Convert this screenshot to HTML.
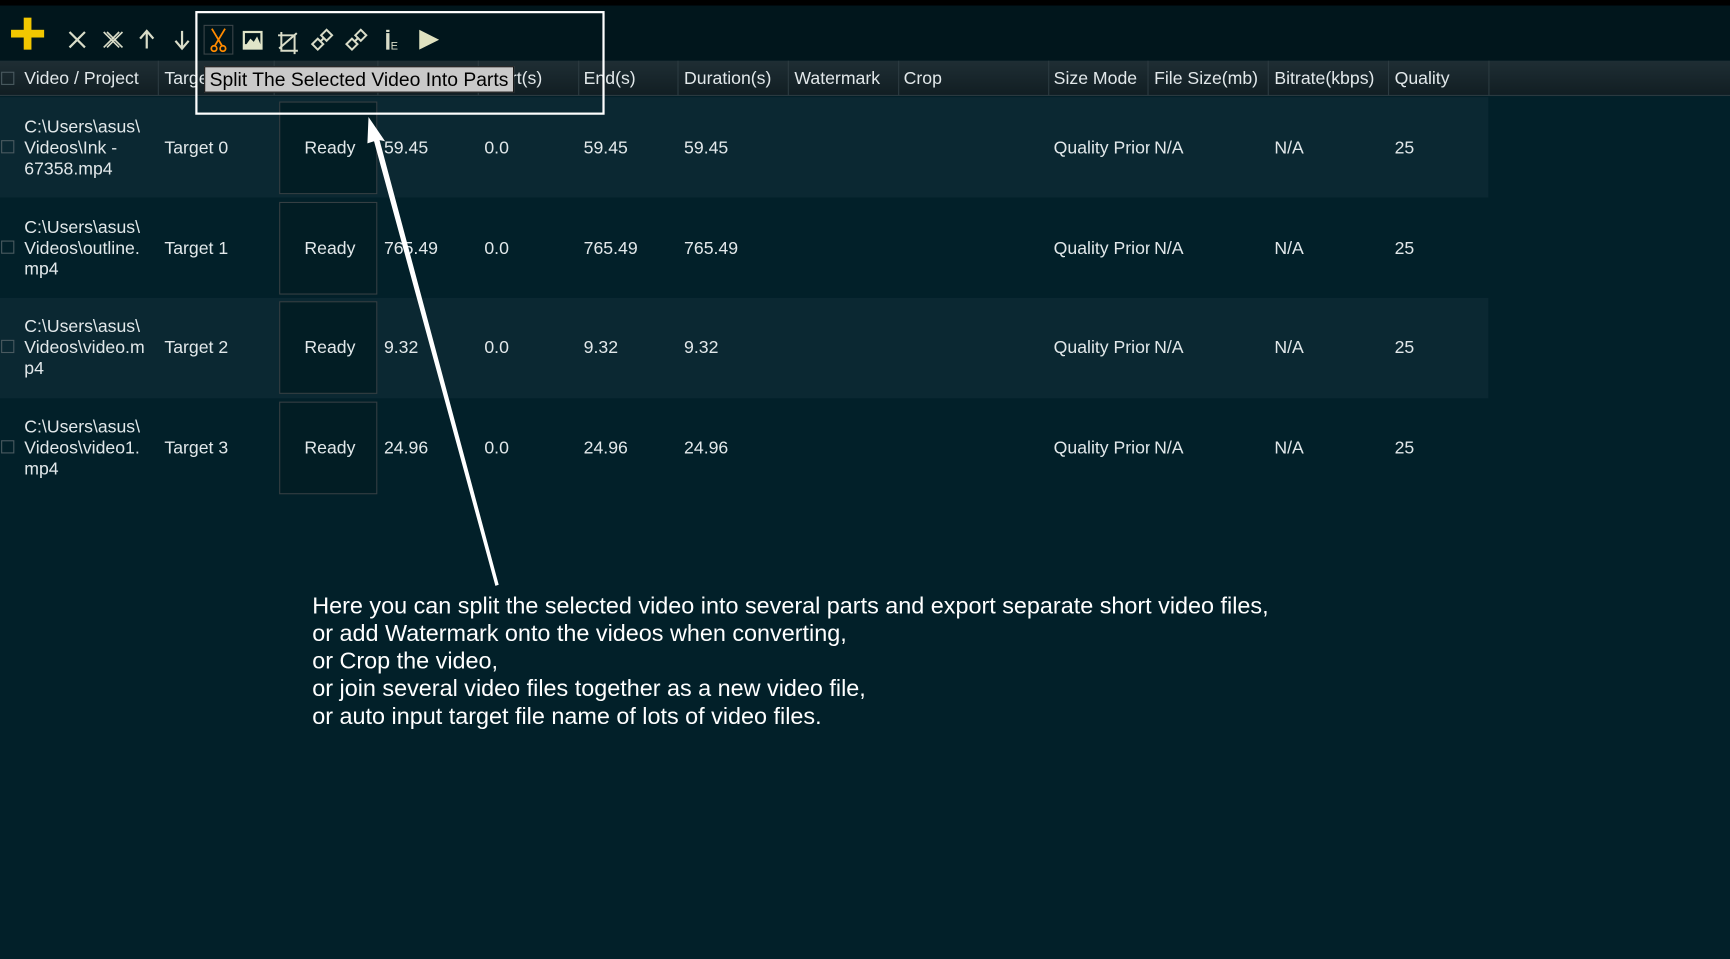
<!DOCTYPE html>
<html><head><meta charset="utf-8"><style>
html,body{margin:0;padding:0;width:1730px;height:959px;overflow:hidden;background:#022029;}
#w{position:absolute;left:0;top:0;width:1568px;height:869px;transform:scale(1.10332);transform-origin:0 0;font-family:"Liberation Sans",Arial,sans-serif;color:#e2e8ea;font-size:16px;}
.top{position:absolute;left:0;top:0;width:1568px;height:55px;background:#01161c;border-top:5px solid #000;box-sizing:border-box;}
.hdr{position:absolute;left:0;top:55px;width:1568px;height:32px;background:linear-gradient(#1f2e34,#111e23);border-bottom:1px solid #2a3a40;box-sizing:border-box;}
.hdr span{position:absolute;top:8px;white-space:nowrap;}
.sep{position:absolute;top:0;width:1px;height:32px;background:#2c3b41;}
.row{position:absolute;left:0;width:1349px;height:91px;}
.light{background:#0b2832;}
.t{position:absolute;white-space:nowrap;}
.sm{width:87px;overflow:hidden;}
.cb{position:absolute;left:1px;width:12px;height:12px;border:1px solid #4a5a60;box-sizing:border-box;}
.ready{position:absolute;left:253px;width:89px;height:84px;background:#021d24;border:1px solid #353f43;box-sizing:border-box;text-align:center;line-height:84px;padding-left:3px;}
.note{position:absolute;left:283px;top:537px;font-size:21.2px;line-height:25px;color:#fff;white-space:nowrap;}
</style></head><body><div id="w">
<div class="top"></div>
<svg style="position:absolute;left:0;top:0" width="560" height="60">
<rect x="10" y="27" width="30" height="7" fill="#f2c700"/><rect x="21.5" y="16" width="7" height="29" fill="#f2c700"/>
<g stroke="#d9dcc8" stroke-width="2" fill="none">
<path d="M63 29 L77 43 M77 29 L63 43"/>
<path d="M94 29 L108 43 M108 29 L94 43 M97 29 L111 43 M111 29 L97 43" stroke-width="1.5"/>
<path d="M133 44 L133 29 M127 35 L133 28 L139 35"/>
<path d="M165 28 L165 43 M159 37 L165 44 L171 37"/>
<path d="M255 29 L255 46 L270 46 M252 32 L267 32 L267 49 M253 44 L269 30" stroke-width="1.8"/>
<path d="M283 40 L288 35 L293 40 L288 45 Z M291 32 L296 27 L301 32 L296 37 Z M290 38 L294 34" stroke-width="1.8"/>
<path d="M314 40 L319 35 L324 40 L319 45 Z M322 32 L327 27 L332 32 L327 37 Z M321 38 L325 34" stroke-width="1.8"/>
</g>
<rect x="185" y="23" width="26" height="26" fill="none" stroke="#3a4448" stroke-width="1"/>
<g stroke="#ff8a00" stroke-width="1.6" fill="none"><path d="M192 26 L201 41 M204 26 L195 41"/><circle cx="194" cy="44" r="2.5"/><circle cx="202" cy="44" r="2.5"/></g>
<rect x="220" y="28" width="18" height="17" fill="#e0e4c8"/><rect x="222" y="30" width="14" height="10" fill="#01161c"/><path d="M222 42 L227 35 L230 38 L233 33 L236 40 L236 43 L222 43 Z" fill="#e0e4c8"/>
<rect x="350" y="30" width="3" height="15" fill="#d9dcc8"/><rect x="350" y="27" width="3" height="2" fill="#d9dcc8"/>
<text x="354" y="45" font-size="10" fill="#d9dcc8" font-family="Liberation Sans">E</text>
<path d="M380 27 L398 36 L380 45 Z" fill="#e0e2c0"/>
</svg>
<div class="hdr">
<div class="cb" style="top:10px"></div>
<span style="left:22px">Video / Project</span><div class="sep" style="left:143px"></div>
<span style="left:149px">Target</span><div class="sep" style="left:248px"></div>
<span style="left:348px">Source</span><div class="sep" style="left:342px"></div>
<span style="left:439px">Start(s)</span><div class="sep" style="left:433px"></div>
<span style="left:529px">End(s)</span><div class="sep" style="left:524px"></div>
<span style="left:620px">Duration(s)</span><div class="sep" style="left:614px"></div>
<span style="left:720px">Watermark</span><div class="sep" style="left:714px"></div>
<span style="left:819px">Crop</span><div class="sep" style="left:814px"></div>
<span style="left:955px">Size Mode</span><div class="sep" style="left:950px"></div>
<span style="left:1046px">File Size(mb)</span><div class="sep" style="left:1040px"></div>
<span style="left:1155px">Bitrate(kbps)</span><div class="sep" style="left:1149px"></div>
<span style="left:1264px">Quality</span><div class="sep" style="left:1258px"></div>
<div class="sep" style="left:1349px"></div>
</div>

<div class="row light" style="top:88px"></div>
<div class="row" style="top:179px"></div>
<div class="row light" style="top:270px"></div>
<div class="row" style="top:360px"></div>

<!-- row 0 -->
<div class="cb" style="top:127px"></div>
<div class="t" style="left:22px;top:106px;line-height:19px">C:\Users\asus\<br>Videos\Ink -<br>67358.mp4</div>
<div class="t" style="left:149px;top:126px">Target 0</div>
<div class="ready" style="top:92px">Ready</div>
<div class="t" style="left:348px;top:126px">59.45</div><div class="t" style="left:439px;top:126px">0.0</div>
<div class="t" style="left:529px;top:126px">59.45</div><div class="t" style="left:620px;top:126px">59.45</div>
<div class="t sm" style="left:955px;top:126px">Quality Priority</div><div class="t" style="left:1046px;top:126px">N/A</div><div class="t" style="left:1155px;top:126px">N/A</div><div class="t" style="left:1264px;top:126px">25</div>
<!-- row 1 -->
<div class="cb" style="top:218px"></div>
<div class="t" style="left:22px;top:197px;line-height:19px">C:\Users\asus\<br>Videos\outline.<br>mp4</div>
<div class="t" style="left:149px;top:217px">Target 1</div>
<div class="ready" style="top:183px">Ready</div>
<div class="t" style="left:348px;top:217px">765.49</div><div class="t" style="left:439px;top:217px">0.0</div>
<div class="t" style="left:529px;top:217px">765.49</div><div class="t" style="left:620px;top:217px">765.49</div>
<div class="t sm" style="left:955px;top:217px">Quality Priority</div><div class="t" style="left:1046px;top:217px">N/A</div><div class="t" style="left:1155px;top:217px">N/A</div><div class="t" style="left:1264px;top:217px">25</div>
<!-- row 2 -->
<div class="cb" style="top:308px"></div>
<div class="t" style="left:22px;top:287px;line-height:19px">C:\Users\asus\<br>Videos\video.m<br>p4</div>
<div class="t" style="left:149px;top:307px">Target 2</div>
<div class="ready" style="top:273px">Ready</div>
<div class="t" style="left:348px;top:307px">9.32</div><div class="t" style="left:439px;top:307px">0.0</div>
<div class="t" style="left:529px;top:307px">9.32</div><div class="t" style="left:620px;top:307px">9.32</div>
<div class="t sm" style="left:955px;top:307px">Quality Priority</div><div class="t" style="left:1046px;top:307px">N/A</div><div class="t" style="left:1155px;top:307px">N/A</div><div class="t" style="left:1264px;top:307px">25</div>
<!-- row 3 -->
<div class="cb" style="top:399px"></div>
<div class="t" style="left:22px;top:378px;line-height:19px">C:\Users\asus\<br>Videos\video1.<br>mp4</div>
<div class="t" style="left:149px;top:398px">Target 3</div>
<div class="ready" style="top:364px">Ready</div>
<div class="t" style="left:348px;top:398px">24.96</div><div class="t" style="left:439px;top:398px">0.0</div>
<div class="t" style="left:529px;top:398px">24.96</div><div class="t" style="left:620px;top:398px">24.96</div>
<div class="t sm" style="left:955px;top:398px">Quality Priority</div><div class="t" style="left:1046px;top:398px">N/A</div><div class="t" style="left:1155px;top:398px">N/A</div><div class="t" style="left:1264px;top:398px">25</div>

<div style="position:absolute;left:185px;top:60px;width:281px;height:24px;background:#c9c9c9;border:1px solid #111;box-sizing:border-box;color:#000;font-size:17.5px;line-height:22px;padding-left:4px;white-space:nowrap;overflow:hidden">Split The Selected Video Into Parts</div>
<div style="position:absolute;left:177px;top:10px;width:371px;height:94px;border:2px solid #fff;box-sizing:border-box"></div>

<svg style="position:absolute;left:0;top:0" width="600" height="560">
<polygon points="334,106 349,128 344,127 452,530 449,531 339,128 333,130" fill="#fff"/>
</svg>

<div class="note">Here you can split the selected video into several parts and export separate short video files,<br>or add Watermark onto the videos when converting,<br>or Crop the video,<br>or join several video files together as a new video file,<br>or auto input target file name of lots of video files.</div>
</div></body></html>
